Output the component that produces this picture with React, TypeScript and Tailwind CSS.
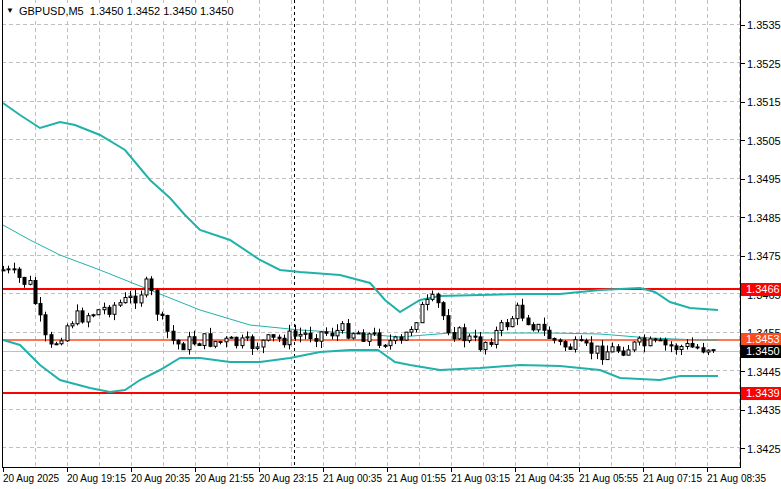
import React from "react";

const W = 740, H = 467;
const py = (p: number) => 24 + ((1.3535 - p) / 0.001) * 38.5;

const upper: [number, number][] = [[3,103],[20,115],[40,128],[60,122],[75,125],[100,135],[125,150],[150,180],[170,198],[185,215],[200,230],[230,240],[260,260],[280,270],[300,272],[340,275],[370,283],[385,300],[400,312],[420,300],[440,296],[480,295],[520,294],[560,294],[600,290],[640,288],[655,292],[670,302],[690,308],[718,310]];
const middle: [number, number][] = [[3,225],[30,240],[60,255],[100,270],[150,290],[200,310],[250,325],[300,330],[350,333],[400,337],[450,333],[500,333],[550,333],[600,334],[650,338],[700,340],[718,340]];
const lower: [number, number][] = [[3,340],[20,345],[40,365],[60,380],[90,388],[110,392],[125,390],[140,380],[160,370],[180,358],[200,358],[230,362],[260,362],[290,358],[320,352],[350,350],[378,350],[395,362],[410,365],[440,370],[480,368],[520,365],[560,366],[600,370],[620,378],[660,380],[680,376],[718,376]];
const path: [number, number][] = [[3,270],[30,285],[45,340],[50,350],[70,320],[100,310],[130,300],[148,285],[160,320],[175,345],[200,340],[250,345],[300,335],[350,330],[400,345],[420,310],[435,300],[450,330],[480,345],[500,330],[518,310],[540,330],[560,345],[600,352],[640,345],[700,348],[716,345]];

const pts = (a: [number, number][]) => a.map(p => p.join(",")).join(" ");
const interp = (x: number) => {
  for (let i = 0; i < path.length - 1; i++) {
    const [x0, y0] = path[i], [x1, y1] = path[i + 1];
    if (x >= x0 && x <= x1) return y0 + ((x - x0) / (x1 - x0)) * (y1 - y0);
  }
  return path[path.length - 1][1];
};
let seed = 7;
const rnd = () => { seed = (seed * 9301 + 49297) % 233280; return seed / 233280; };
const candles: { x: number; o: number; c: number; h: number; l: number }[] = [];
let prev = interp(3);
for (let x = 3; x <= 716; x += 5.3) {
  const target = interp(x) + (rnd() - 0.5) * 16;
  const o = prev, c = target;
  const h = Math.min(o, c) - rnd() * 7;
  const l = Math.max(o, c) + rnd() * 7;
  candles.push({ x, o, c, h, l });
  prev = c;
}

const prices = ["1.3535","1.3525","1.3515","1.3505","1.3495","1.3485","1.3475","1.3465","1.3455","1.3445","1.3435","1.3425"];
const times = ["20 Aug 2025","20 Aug 19:15","20 Aug 20:35","20 Aug 21:55","20 Aug 23:15","21 Aug 00:35","21 Aug 01:55","21 Aug 03:15","21 Aug 04:35","21 Aug 05:55","21 Aug 07:15","21 Aug 08:35"];
const tags = [
  { p: 1.3466, t: "1.3466", c: "bg-[#ff0000]" },
  { p: 1.3453, t: "1.3453", c: "bg-[#ff4a1c]" },
  { p: 1.345, t: "1.3450", c: "bg-black" },
  { p: 1.3439, t: "1.3439", c: "bg-[#ff0000]" },
];

export default function App() {
  return (
    <div className="w-[781px] h-[489px] bg-white overflow-hidden text-black" style={{ fontFamily: '"Liberation Sans", Arial, sans-serif' }}>
      <div className="flex h-[468px]">
        <div className="relative w-[741px] h-[468px]">
          <svg width={741} height={468} className="block">
            {Array.from({ length: 23 }, (_, i) => 35 + i * 32).map(x => (
              <line key={x} x1={x + 0.5} y1={0} x2={x + 0.5} y2={H} stroke="#c0c0c0" strokeDasharray="4 3" />
            ))}
            {prices.map(p => (
              <line key={p} x1={2} y1={Math.round(py(+p)) + 0.5} x2={W} y2={Math.round(py(+p)) + 0.5} stroke="#c0c0c0" strokeDasharray="4 3" />
            ))}
            <line x1={294.5} y1={0} x2={294.5} y2={H} stroke="#000" strokeDasharray="3 3" />
            <line x1={2} y1={351.5} x2={W} y2={351.5} stroke="#c0c0c0" />
            <line x1={2} y1={340} x2={W} y2={340} stroke="#ff4a1c" strokeWidth={1.5} />
            <line x1={2} y1={289} x2={W} y2={289} stroke="#ff0000" strokeWidth={2} />
            <line x1={2} y1={393} x2={W} y2={393} stroke="#ff0000" strokeWidth={2} />
            <polyline points={pts(upper)} fill="none" stroke="#20b2aa" strokeWidth={2} />
            <polyline points={pts(middle)} fill="none" stroke="#20b2aa" strokeWidth={1} />
            <polyline points={pts(lower)} fill="none" stroke="#20b2aa" strokeWidth={2} />
            {candles.map((k, i) => {
              const x = Math.round(k.x) + 0.5;
              const top = Math.min(k.o, k.c), bh = Math.max(1, Math.abs(k.c - k.o));
              const bull = k.c < k.o;
              return (
                <g key={i}>
                  <line x1={x} y1={k.h} x2={x} y2={k.l} stroke="#000" />
                  <rect x={x - 1.5} y={top} width={3} height={bh} fill={bull ? "#fff" : "#000"} stroke="#000" strokeWidth={1} />
                </g>
              );
            })}
            <line x1={2.5} y1={0} x2={2.5} y2={H} stroke="#000" />
            <line x1={2} y1={H + 0.5} x2={W} y2={H + 0.5} stroke="#000" />
            <line x1={W + 0.5} y1={0} x2={W + 0.5} y2={H + 1} stroke="#000" />
          </svg>
          <div className="absolute left-[6px] top-[3px] flex items-center gap-[5px] text-[11px] bg-white pr-1">
            <span className="text-[8px]">▼</span>
            <span>GBPUSD,M5&nbsp; 1.3450 1.3452 1.3450 1.3450</span>
          </div>
        </div>
        <div className="relative flex-1 text-[11px]">
          {prices.map(p => (
            <div key={p} className="absolute left-0 flex items-center" style={{ top: py(+p) - 7 }}>
              <span className="w-[4px] h-px bg-black mr-[2px]" />
              <span>{p}</span>
            </div>
          ))}
          {tags.map(t => (
            <div key={t.t} className={`absolute left-0 w-[40px] h-[13px] leading-[13px] text-white pl-[5px] ${t.c}`} style={{ top: py(t.p) - 6.5 }}>
              {t.t}
            </div>
          ))}
        </div>
      </div>
      <div className="relative h-[21px] text-[10px]">
        {times.map((t, i) => (
          <div key={t} className="absolute top-0 flex flex-col" style={{ left: 3 + i * 64 }}>
            <span className="w-px h-[4px] bg-black" />
            <span className="leading-[14px] whitespace-nowrap">{t}</span>
          </div>
        ))}
      </div>
    </div>
  );
}
